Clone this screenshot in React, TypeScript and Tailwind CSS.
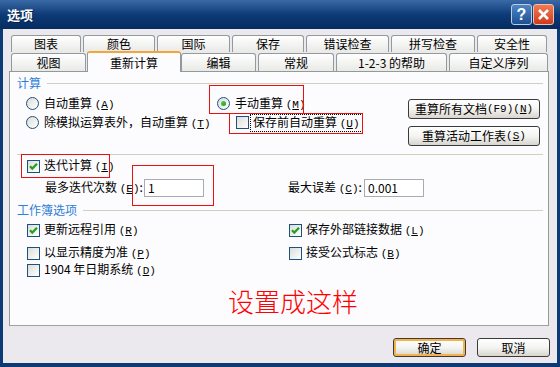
import type { ReactNode } from "react";

const Mn = ({ k }: { k: string }) => (
  <span className="font-['Liberation_Mono',monospace] text-[11px]">
    (<span className="underline underline-offset-1">{k}</span>)
  </span>
);

const Radio = ({ checked }: { checked?: boolean }) => (
  <span className="w-[13px] h-[13px] shrink-0 rounded-full border border-[#1c5180] bg-gradient-to-br from-[#dcdcd7] to-white flex items-center justify-center">
    {checked && (
      <span className="w-[5px] h-[5px] rounded-full bg-gradient-to-br from-[#55d355] to-[#1a9a1a]" />
    )}
  </span>
);

const Check = ({ checked }: { checked?: boolean }) => (
  <span className="w-[13px] h-[13px] shrink-0 border border-[#1c5180] bg-gradient-to-br from-[#dcdcd7] to-white flex items-center justify-center">
    {checked && (
      <svg width="11" height="11" viewBox="0 0 11 11">
        <path d="M2 5.2 L4.3 7.6 L9 2.8" fill="none" stroke="#21a121" strokeWidth="2.2" />
      </svg>
    )}
  </span>
);

const Btn = ({ children, className = "" }: { children: ReactNode; className?: string }) => (
  <div
    className={
      "flex items-center justify-center rounded-[3px] border border-[#3b3b3b] bg-gradient-to-b from-white via-[#f4f4f2] to-[#d8d5cd] " +
      className
    }
  >
    {children}
  </div>
);

const GroupHead = ({ label }: { label: string }) => (
  <div className="mt-[4px] h-[14px] flex items-center pl-[7px] pr-[5px]">
    <span className="text-[#2f7fd6] leading-none">{label}</span>
    <div className="flex-1 h-px bg-[#d0d0bf] ml-[6px]" />
  </div>
);

const row1 = [
  { t: "图表", w: "w-[70px]", m: "" },
  { t: "颜色", w: "w-[72px]", m: "ml-[2px]" },
  { t: "国际", w: "w-[73px]", m: "ml-[2px]" },
  { t: "保存", w: "w-[72px]", m: "ml-[2px]" },
  { t: "错误检查", w: "w-[83px]", m: "ml-[2px]" },
  { t: "拼写检查", w: "w-[84px]", m: "ml-[2px]" },
  { t: "安全性", w: "w-[70px]", m: "ml-[2px]" },
];

const row2 = [
  { t: "视图", w: "w-[75px]", m: "" },
  { t: "重新计算", w: "w-[94px]", m: "ml-[1px]", sel: true },
  { t: "编辑", w: "w-[75px]", m: "" },
  { t: "常规", w: "w-[76px]", m: "ml-[2px]" },
  { t: "1-2-3 的帮助", w: "w-[111px]", m: "ml-[2px]" },
  { t: "自定义序列", w: "w-[99px]", m: "ml-[2px]" },
];

const tabCls =
  "flex items-center justify-center rounded-t-[3px] border border-b-0 border-[#919b9c] bg-gradient-to-b from-white to-[#e9e9e6] leading-none";

export default function App() {
  return (
    <div className="w-[560px] h-[367px] flex flex-col text-[12px] text-black font-['Noto_Sans_CJK_SC','Liberation_Sans',sans-serif] select-none">
      {/* title bar */}
      <div className="h-[29px] shrink-0 flex items-center pl-[7px] pr-[6px] bg-gradient-to-b from-[#3a6aa6] via-[#0d3b78] to-[#062c5f]">
        <span className="text-white font-bold text-[13px] [text-shadow:1px_1px_0_#02204a]">选项</span>
        <div className="ml-auto flex gap-[1px]">
          <div className="w-[21px] h-[21px] rounded-[3px] border border-[#b9cde6] bg-gradient-to-b from-[#4f86c6] to-[#1c4f93] flex items-center justify-center text-white font-bold text-[16px] leading-none font-['Liberation_Sans',sans-serif]">
            ?
          </div>
          <div className="w-[21px] h-[21px] rounded-[3px] border border-[#f0c0b0] bg-gradient-to-b from-[#f07a52] to-[#d0391a] flex items-center justify-center">
            <svg width="13" height="13" viewBox="0 0 13 13">
              <path d="M2 2 L11 11 M11 2 L2 11" stroke="white" strokeWidth="2.6" />
            </svg>
          </div>
        </div>
      </div>

      {/* body */}
      <div className="flex-1 flex flex-col bg-[#ebe9ed] border-x-[3px] border-b-[4px] border-[#0b3a74]">
        {/* tabs */}
        <div className="pt-[6px] pl-[8px]">
          <div className="flex h-[17px]">
            {row1.map((t) => (
              <div key={t.t} className={`${tabCls} ${t.w} ${t.m} h-[17px]`}>
                {t.t}
              </div>
            ))}
          </div>
          <div className="flex h-[18px] mt-[1px] items-end">
            {row2.map((t) =>
              t.sel ? (
                <div
                  key={t.t}
                  className={`${t.w} ${t.m} h-[21px] -mb-px relative z-10 flex items-center justify-center rounded-t-[3px] border border-b-0 border-[#919b9c] border-t-2 border-t-[#f3a73a] bg-[#fcfcfe] leading-none`}
                >
                  {t.t}
                </div>
              ) : (
                <div key={t.t} className={`${tabCls} ${t.w} ${t.m} h-[18px]`}>
                  {t.t}
                </div>
              )
            )}
          </div>
        </div>

        {/* panel */}
        <div className="relative ml-[6px] w-[540px] h-[255px] border border-[#919b9c] border-b-[#a0a0a0] bg-[#fcfcfe] leading-none">
          <GroupHead label="计算" />
          <div className="h-[60px] flex">
            <div className="w-[207px] pl-[16px] pt-[4px]">
              <div className="h-[19px] flex items-center gap-[5px]">
                <Radio />
                <span>
                  自动重算 <Mn k="A" />
                </span>
              </div>
              <div className="h-[19px] flex items-center gap-[5px]">
                <Radio />
                <span>
                  除模拟运算表外，自动重算 <Mn k="T" />
                </span>
              </div>
            </div>
            <div className="w-[191px] pt-[4px]">
              <div className="h-[19px] flex items-center gap-[5px]">
                <Radio checked />
                <span>
                  手动重算 <Mn k="M" />
                </span>
              </div>
              <div className="h-[19px] flex items-center gap-[2px] pl-[19px]">
                <Check />
                <span className="outline outline-1 outline-dotted outline-black px-[2px] py-[1px]">
                  保存前自动重算 <Mn k="U" />
                </span>
              </div>
            </div>
            <div className="pt-[9px] flex flex-col gap-[7px]">
              <Btn className="w-[132px] h-[20px]">
                重算所有文档<span className="font-['Liberation_Mono',monospace] text-[11px]">(F9)</span> <Mn k="N" />
              </Btn>
              <Btn className="w-[132px] h-[20px]">
                重算活动工作表 <Mn k="S" />
              </Btn>
            </div>
          </div>

          <div className="mt-[4px] h-px ml-[7px] mr-[5px] bg-[#d0d0bf]" />

          <div className="h-[22px] flex items-center pl-[17px] gap-[4px]">
            <Check checked />
            <span>
              迭代计算 <Mn k="I" />
            </span>
          </div>
          <div className="h-[22px] flex items-center pl-[35px]">
            <span className="w-[99px]">
              最多迭代次数 <Mn k="E" />:
            </span>
            <div className="w-[60px] h-[18px] border border-[#a5acb2] bg-white flex items-center px-[3px]">1</div>
            <span className="w-[76px] ml-[84px]">
              最大误差 <Mn k="C" />:
            </span>
            <div className="w-[60px] h-[18px] border border-[#a5acb2] bg-white flex items-center px-[3px]">0.001</div>
          </div>

          <GroupHead label="工作簿选项" />
          <div className="mt-[4px] h-[18px] flex items-center">
            <div className="w-[279px] pl-[17px] flex items-center gap-[4px]">
              <Check checked />
              <span>
                更新远程引用 <Mn k="R" />
              </span>
            </div>
            <div className="flex items-center gap-[4px]">
              <Check checked />
              <span>
                保存外部链接数据 <Mn k="L" />
              </span>
            </div>
          </div>
          <div className="mt-[5px] h-[18px] flex items-center">
            <div className="w-[279px] pl-[17px] flex items-center gap-[4px]">
              <Check />
              <span>
                以显示精度为准 <Mn k="P" />
              </span>
            </div>
            <div className="flex items-center gap-[4px]">
              <Check />
              <span>
                接受公式标志 <Mn k="B" />
              </span>
            </div>
          </div>
          <div className="h-[16px] flex items-center pl-[17px] gap-[4px]">
            <Check />
            <span>
              1904 年日期系统 <Mn k="D" />
            </span>
          </div>

          <div className="mt-[9px] pl-[218px] text-[26px] leading-[28px] font-light text-[#ff0000]">设置成这样</div>

          {/* red annotation boxes */}
          <div className="absolute left-[199px] top-[13px] w-[95px] h-[29px] border border-[#e81010]" />
          <div className="absolute left-[219px] top-[41px] w-[134px] h-[21px] border border-[#e81010]" />
          <div className="absolute left-[11px] top-[82px] w-[89px] h-[24px] border border-[#e81010]" />
          <div className="absolute left-[122px] top-[93px] w-[82px] h-[41px] border border-[#e81010]" />
        </div>

        {/* footer */}
        <div className="flex justify-end gap-[11px] pt-[12px] pr-[7px] leading-none">
          <Btn className="w-[73px] h-[19px] shadow-[inset_0_0_0_2px_#f5b14a]">确定</Btn>
          <Btn className="w-[73px] h-[19px]">取消</Btn>
        </div>
      </div>
    </div>
  );
}
